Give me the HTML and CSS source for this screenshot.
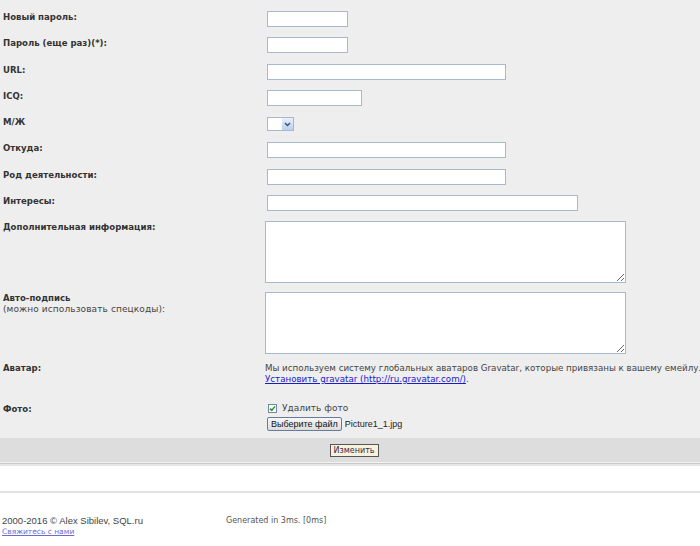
FILE: index.html
```html
<!DOCTYPE html>
<html lang="ru">
<head>
<meta charset="utf-8">
<title>Профиль</title>
<link rel="stylesheet" href="styles.css">
</head>
<body>
<form class="form">
  <div class="row"><label class="lbl">Новый пароль:</label><div class="ctl"><input type="password" class="inp w-s"></div></div>
  <div class="row"><label class="lbl">Пароль (еще раз)(*):</label><div class="ctl"><input type="password" class="inp w-s"></div></div>
  <div class="row"><label class="lbl">URL:</label><div class="ctl"><input type="text" class="inp w-l"></div></div>
  <div class="row"><label class="lbl">ICQ:</label><div class="ctl"><input type="text" class="inp w-m"></div></div>
  <div class="row"><label class="lbl">М/Ж</label><div class="ctl">
    <span class="select"><select><option></option></select><span class="arrow"><svg width="7" height="5" viewBox="0 0 7 5"><path d="M1 1 L3.5 3.5 L6 1" fill="none" stroke="#34507a" stroke-width="1.4"/></svg></span></span>
  </div></div>
  <div class="row"><label class="lbl">Откуда:</label><div class="ctl"><input type="text" class="inp w-l"></div></div>
  <div class="row"><label class="lbl">Род деятельности:</label><div class="ctl"><input type="text" class="inp w-l"></div></div>
  <div class="row"><label class="lbl">Интересы:</label><div class="ctl"><input type="text" class="inp w-xl"></div></div>
  <div class="row tall"><label class="lbl">Дополнительная информация:</label><div class="ctl"><textarea></textarea></div></div>
  <div class="row tall"><label class="lbl">Авто-подпись<br><span class="note">(можно использовать спецкоды):</span></label><div class="ctl"><textarea></textarea></div></div>
  <div class="row avatar"><label class="lbl">Аватар:</label><div class="ctl text">Мы используем систему глобальных аватаров Gravatar, которые привязаны к вашему емейлу.<br><a href="#" class="link">Установить gravatar (http://ru.gravatar.com/)</a>.</div></div>
  <div class="row photo"><label class="lbl">Фото:</label><div class="ctl">
    <div class="check-line"><span class="checkbox"><svg width="7" height="7" viewBox="0 0 7 7"><path d="M1 3.6 L2.8 5.4 L6 1.4" fill="none" stroke="#1f9a1f" stroke-width="1.5"/></svg></span><span class="del">Удалить фото</span></div>
    <div class="file-line"><button type="button" class="file-btn">Выберите файл</button><span class="file-name">Picture1_1.jpg</span></div>
  </div></div>
</form>
<div class="bar"><button type="button" class="submit">Изменить</button></div>
<div class="sep"></div>
<div class="hr"></div>
<footer class="footer">
  <div class="foot-left">
    <div class="copy">2000-2016 © Alex Sibilev, SQL.ru</div>
    <a href="#" class="contact">Свяжитесь с нами</a>
  </div>
  <div class="gen">Generated in 3ms. [0ms]</div>
</footer>
</body>
</html>
```

FILE: styles.css
```css
html, body {
  margin: 0;
  padding: 0;
  overflow: hidden;
}
body {
  background: #ffffff;
  font-family: "DejaVu Sans", Verdana, sans-serif;
  font-size: 9px;
  line-height: 11px;
  color: #333333;
}
.form {
  background: #eeeeee;
  padding-top: 11px;
  margin: 0;
}
.row {
  display: grid;
  grid-template-columns: 265px 1fr;
  height: 26.25px;
  align-items: start;
}
.row.tall { height: 70.5px; }
.row.avatar { height: 41px; }
.row.photo { height: auto; padding-bottom: 7px; }
.lbl {
  padding-left: 3px;
  font-family: "DejaVu Sans Condensed", "DejaVu Sans", sans-serif;
  font-stretch: semi-condensed;
  font-size: 9.5px;
  font-weight: bold;
  color: #333333;
}
.note {
  font-family: "DejaVu Sans", Verdana, sans-serif;
  font-stretch: normal;
  font-size: 9px;
  font-weight: normal;
  color: #444444;
  letter-spacing: 0.1px;
}
.ctl { min-width: 0; }
.inp {
  display: block;
  box-sizing: border-box;
  height: 16px;
  margin: 0 0 0 2px;
  padding: 0 2px;
  border: 1px solid #a8b9cf;
  background: #ffffff;
  font: inherit;
  outline: none;
}
.w-s { width: 81px; }
.w-l { width: 239px; }
.w-m { width: 95px; }
.w-xl { width: 311px; }
.select {
  position: relative;
  display: block;
  width: 27px;
  height: 14px;
  margin: 1px 0 0 2px;
}
.select select {
  appearance: none;
  -webkit-appearance: none;
  display: block;
  box-sizing: border-box;
  width: 100%;
  height: 100%;
  margin: 0;
  padding: 0;
  border: 1px solid #a8b9cf;
  background: #ffffff;
  border-radius: 0;
}
.select .arrow {
  position: absolute;
  top: 1px;
  right: 1px;
  bottom: 1px;
  width: 11px;
  background: linear-gradient(#e8f0fc, #bccfee);
  display: flex;
  align-items: center;
  justify-content: center;
}
textarea {
  display: block;
  box-sizing: border-box;
  width: 361px;
  height: 62px;
  margin: 0;
  border: 1px solid #a8b9cf;
  background: #ffffff;
  resize: both;
  outline: none;
}
.text {
  color: #444444;
  white-space: nowrap;
  padding-top: 1px;
  font-size: 8.7px;
}
.link { color: #1a1acc; text-decoration: underline; }
.check-line {
  display: flex;
  align-items: center;
  gap: 5px;
  margin-left: 3px;
  height: 11px;
}
.del { color: #444444; }
.checkbox {
  box-sizing: border-box;
  width: 9px;
  height: 9px;
  border: 1px solid #6f87a6;
  background: #ffffff;
  display: flex;
  align-items: center;
  justify-content: center;
}
.checkbox svg { display: block; }
.file-line {
  display: flex;
  align-items: center;
  gap: 3px;
  margin: 3px 0 0 2px;
}
.file-btn {
  box-sizing: border-box;
  height: 14px;
  padding: 0 3px;
  margin: 0;
  border: 1px solid #667c9a;
  border-radius: 2px;
  background: linear-gradient(#f7f7f7, #dcdcdc);
  font-family: "Liberation Sans", Arial, sans-serif;
  font-size: 9px;
  line-height: 12px;
  color: #111111;
}
.file-name {
  font-family: "Liberation Sans", Arial, sans-serif;
  font-size: 9px;
  color: #222222;
}
.bar {
  background: #dddddd;
  height: 24px;
  display: flex;
  justify-content: center;
  align-items: center;
  padding-left: 8px;
  border-bottom: 1px solid #f3f3f3;
}
.submit {
  box-sizing: border-box;
  height: 13px;
  padding: 0 3px;
  margin: 0;
  border: 1px solid #555555;
  border-radius: 0;
  background: #f5f2de;
  font-family: "DejaVu Sans", Verdana, sans-serif;
  font-size: 8px;
  line-height: 11px;
  color: #3a2a4a;
}
.sep {
  height: 1px;
  background: #c8c8c8;
  border-bottom: 2px solid #e6e6e6;
}
.hr {
  height: 2px;
  background: #e2e2e2;
  margin-top: 25px;
}
.footer {
  display: grid;
  grid-template-columns: 226px 1fr;
  padding: 22px 0 0 2px;
}
.foot-left { display: flex; flex-direction: column; align-items: flex-start; }
.copy {
  font-family: "Liberation Sans", Arial, sans-serif;
  font-size: 9.5px;
  color: #444444;
}
.contact {
  font-size: 7.5px;
  color: #6a6ad0;
  text-decoration: underline;
}
.gen {
  font-size: 8px;
  color: #555555;
  margin-left: -2px;
}
```
